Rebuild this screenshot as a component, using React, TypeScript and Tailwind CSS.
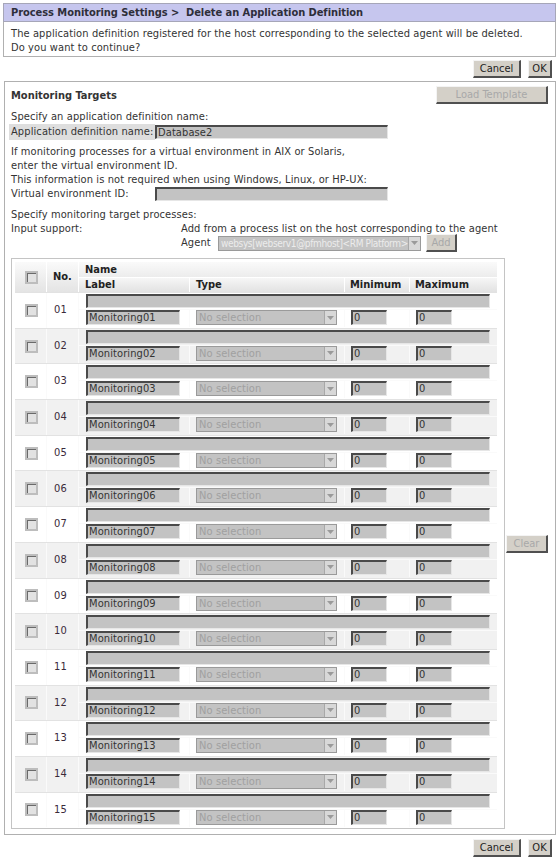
import React from 'react';

const font = "font-['DejaVu_Sans_Condensed','DejaVu_Sans',sans-serif]";

function Btn({ children, disabled, className = '' }: { children: React.ReactNode; disabled?: boolean; className?: string }) {
  return (
    <div
      className={`flex items-center justify-center h-[18px] bg-[#d4d0c8] border-t border-l border-t-[#f4f4f4] border-l-[#f4f4f4] border-b-2 border-r-2 border-b-[#505050] border-r-[#505050] text-[11px] leading-none ${
        disabled ? 'text-[#a8a8a8]' : 'text-[#222]'
      } ${className}`}
    >
      {children}
    </div>
  );
}

function Field({ children, className = '', dim }: { children?: React.ReactNode; className?: string; dim?: boolean }) {
  return (
    <div
      className={`h-[14px] bg-[#c3c3c3] border-t-2 border-l-2 border-t-[#4a4a4a] border-l-[#4a4a4a] border-b border-r border-b-[#e6e6e6] border-r-[#e6e6e6] pl-[1px] text-[11px] leading-[11px] overflow-hidden whitespace-nowrap ${
        dim ? 'text-[#9a9a9a]' : 'text-[#333]'
      } ${className}`}
    >
      {children}
    </div>
  );
}

function Select({ children, className = '', light }: { children?: React.ReactNode; className?: string; light?: boolean }) {
  return (
    <div className={`flex h-[15px] bg-[#c3c3c3] border border-[#9a9a9a] ${className}`}>
      <div
        className={`flex-1 pl-[2px] overflow-hidden whitespace-nowrap ${
          light ? 'text-[#ececec] text-[10px] leading-[13px] tracking-[-0.35px]' : 'text-[#a0a0a0] text-[11px] leading-[13px]'
        }`}
      >
        {children}
      </div>
      <div className="w-[12px] h-[13px] bg-[#d8d8d8] border-l border-[#a8a8a8] flex items-center justify-center">
        <svg width="7" height="4" viewBox="0 0 7 4">
          <path d="M0 0 L7 0 L3.5 4 Z" fill="#9a9a9a" />
        </svg>
      </div>
    </div>
  );
}

function Check() {
  return (
    <div className="w-[13px] h-[13px] bg-[#bdbdbd] flex items-center justify-center">
      <div className="w-[9px] h-[9px] bg-[#e2e2e2] border-t border-l border-[#6a6a6a]" />
    </div>
  );
}

function Row({ n }: { n: number }) {
  const no = String(n).padStart(2, '0');
  const alt = n % 2 === 0;
  return (
    <div className={`flex h-[35.7px] border-t border-[#e2e2e2] ${alt ? 'bg-[#f1f1f1]' : 'bg-white'}`}>
      <div className="w-[31px] flex items-center justify-center pl-[1px]">
        <Check />
      </div>
      <div className="w-[32px] flex items-center pl-[7px] border-l border-[#fafafa] text-[11px] text-[#3a2a3a]">{no}</div>
      <div className="flex-1 flex flex-col border-l border-[#fafafa]">
        <div className="h-[16px] pt-[1px] px-[7px]">
          <Field className="w-full" />
        </div>
        <div className="flex h-[18px] border-t border-[#fafafa]">
          <div className="w-[110px] pl-[7px]">
            <Field className="w-[94px] h-[15px]">Monitoring{no}</Field>
          </div>
          <div className="w-[155px] pl-[6px] border-l border-[#fafafa]">
            <Select className="w-[141px]">No selection</Select>
          </div>
          <div className="w-[65px] pl-[6px] border-l border-[#fafafa]">
            <Field className="w-[36px] h-[15px]">0</Field>
          </div>
          <div className="flex-1 pl-[6px] border-l border-[#fafafa]">
            <Field className="w-[36px] h-[15px]">0</Field>
          </div>
        </div>
      </div>
    </div>
  );
}

export default function App() {
  const rows = Array.from({ length: 15 }, (_, i) => i + 1);
  return (
    <div className={`${font} w-[559px] h-[861px] bg-white text-[11px] tracking-[0.1px] text-[#333] pt-[3px] pl-[3px] pr-[3px]`}>
      {/* Title */}
      <div className="h-[19px] bg-[#c6c6ee] border border-[#a6a6b8] pl-[7px] font-bold tracking-[-0.05px] leading-[17px] text-[#2e2e3a]">
        Process Monitoring Settings &gt;&nbsp; Delete an Application Definition
      </div>
      <div className="border border-t-0 border-[#b0b0b0] pl-[7px] pt-[5px] pb-[1px] leading-[14px]">
        <div>The application definition registered for the host corresponding to the selected agent will be deleted.</div>
        <div>Do you want to continue?</div>
      </div>

      <div className="flex justify-end gap-[7px] pr-[4px] mt-[3px] h-[18px] tracking-normal">
        <Btn className="w-[48px]">Cancel</Btn>
        <Btn className="w-[24px]">OK</Btn>
      </div>

      {/* Main panel */}
      <div className="mt-[3px] ml-[1px] border border-[#b0b0b0] pl-[6px] pr-[7px] pt-[4px] pb-[5px]">
        <div className="flex justify-between items-start h-[18px]">
          <div className="font-bold tracking-normal pt-[3px] leading-[14px]">Monitoring Targets</div>
          <Btn disabled className="w-[112px] tracking-normal">Load Template</Btn>
        </div>

        <div className="mt-[6px] leading-[14px]">Specify an application definition name:</div>
        <div className="flex items-center h-[16px]">
          <div className="w-[146px] -ml-[2px] pl-[2px] bg-[#dedede] leading-[16px]">Application definition name:</div>
          <Field className="w-[233px]">Database2</Field>
        </div>

        <div className="mt-[5px] leading-[14px]">
          <div>If monitoring processes for a virtual environment in AIX or Solaris,</div>
          <div>enter the virtual environment ID.</div>
          <div>This information is not required when using Windows, Linux, or HP-UX:</div>
        </div>
        <div className="flex items-center h-[14px]">
          <div className="w-[144px]">Virtual environment ID:</div>
          <Field className="w-[233px]" />
        </div>

        <div className="mt-[7px] leading-[14px]">Specify monitoring target processes:</div>
        <div className="flex leading-[14px]">
          <div className="w-[170px]">Input support:</div>
          <div>Add from a process list on the host corresponding to the agent</div>
        </div>
        <div className="flex items-center h-[16px] -mt-[1px] pl-[170px]">
          <div className="w-[37px]">Agent</div>
          <Select light className="w-[203px]">
            websys[webserv1@pfmhost]&lt;RM Platform&gt;
          </Select>
          <Btn disabled className="w-[31px] ml-[5px] tracking-normal">Add</Btn>
        </div>

        {/* Table + Clear */}
        <div className="flex items-center mt-[7px]">
          <div className="w-[494px] border border-[#c4c4c4] pt-[3px] pl-[3px] pr-[7px] pb-[1px]">
            {/* header */}
            <div className="flex h-[30px] font-bold tracking-normal text-[#222]">
              <div className="w-[31px] flex items-center justify-center pl-[1px] bg-gradient-to-b from-[#fafafa] to-[#e4e4e4]">
                <Check />
              </div>
              <div className="w-[32px] flex items-center pl-[6px] border-l border-white bg-gradient-to-b from-[#fafafa] to-[#e4e4e4]">
                No.
              </div>
              <div className="flex-1 flex flex-col border-l border-white">
                <div className="h-[15px] pl-[6px] leading-[15px] bg-gradient-to-b from-[#fafafa] to-[#ececec]">Name</div>
                <div className="flex h-[15px] leading-[14px] border-t border-white">
                  <div className="w-[110px] pl-[6px] bg-gradient-to-b from-[#f6f6f6] to-[#e2e2e2]">Label</div>
                  <div className="w-[155px] pl-[6px] border-l border-white bg-gradient-to-b from-[#f6f6f6] to-[#e2e2e2]">Type</div>
                  <div className="w-[65px] pl-[5px] border-l border-white bg-gradient-to-b from-[#f6f6f6] to-[#e2e2e2]">Minimum</div>
                  <div className="flex-1 pl-[5px] border-l border-white bg-gradient-to-b from-[#f6f6f6] to-[#e2e2e2]">Maximum</div>
                </div>
              </div>
            </div>
            {rows.map((n) => (
              <Row key={n} n={n} />
            ))}
          </div>
          <Btn disabled className="w-[42px] ml-[1px] tracking-normal">Clear</Btn>
        </div>
      </div>

      <div className="flex justify-end gap-[7px] pr-[4px] mt-[4px] h-[18px] tracking-normal">
        <Btn className="w-[48px]">Cancel</Btn>
        <Btn className="w-[24px]">OK</Btn>
      </div>
    </div>
  );
}
